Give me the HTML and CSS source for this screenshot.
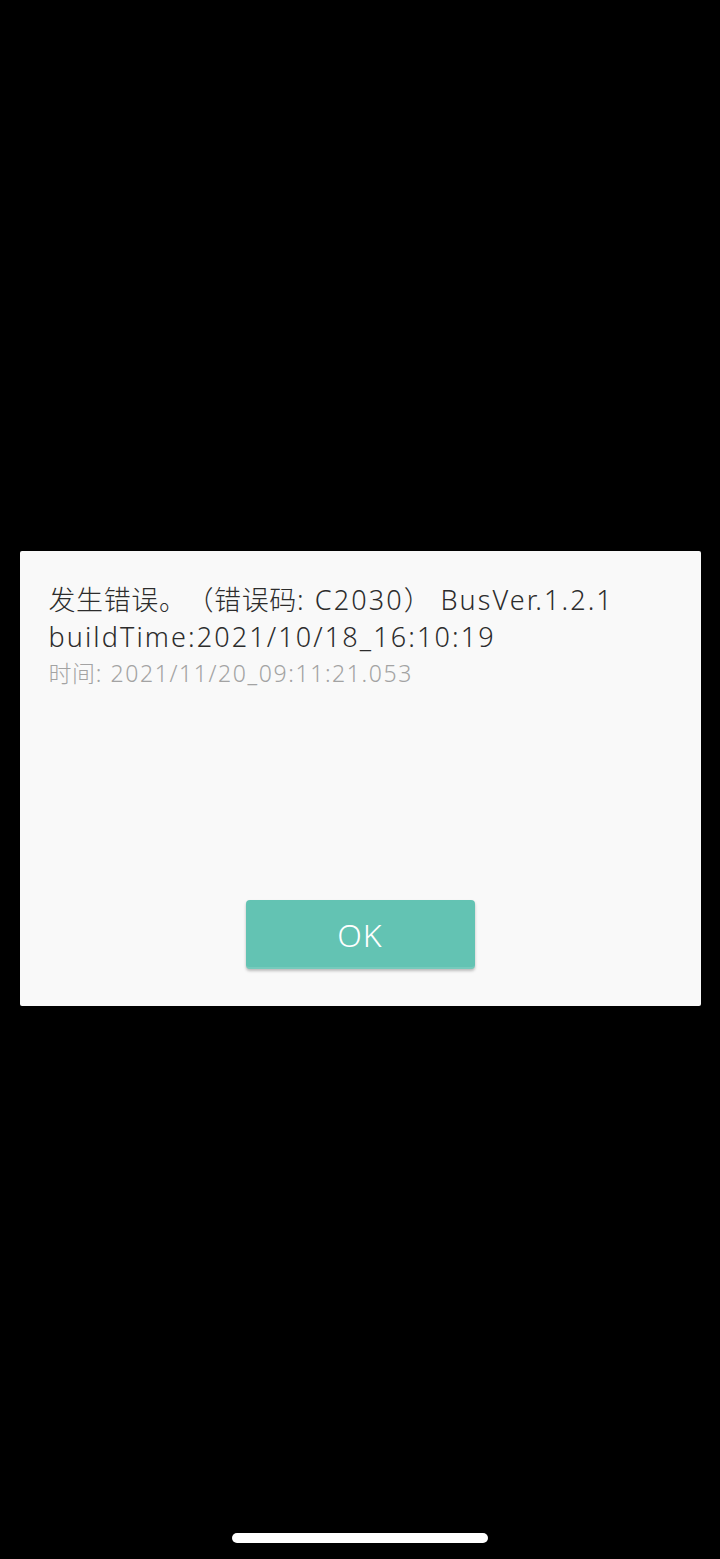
FILE: index.html
```
<!DOCTYPE html>
<html>
<head>
<meta charset="utf-8">
<link rel="stylesheet" href="styles.css">
</head>
<body>
<div class="screen">
  <div class="dialog">
    <div class="msg">
      <div class="line main"><span class="cjk">发生错误。（错误码</span>: C2030<span class="cjk">）</span> BusVer.1.2.1</div>
      <div class="line main">buildTime:2021/10/18_16:10:19</div>
      <div class="line sub"><span class="cjk">时间</span>: 2021/11/20_09:11:21.053</div>
    </div>
    <div class="actions">
      <button class="ok">OK</button>
    </div>
  </div>
  <div class="home-bar"></div>
</div>
</body>
</html>
```
FILE: styles.css
```
html, body {
  margin: 0;
  padding: 0;
  background: #000;
}
.screen {
  width: 720px;
  height: 1559px;
  background: #000;
  display: flex;
  flex-direction: column;
  align-items: center;
  position: relative;
  font-family: "Noto Sans", "Noto Sans CJK SC", sans-serif;
}
.dialog {
  margin-top: 551px;
  width: 681px;
  height: 455px;
  background: #f9f9f9;
  border-radius: 2px;
  box-sizing: border-box;
  padding: 30px 0 0 0;
  display: flex;
  flex-direction: column;
}
.msg {
  flex: 1;
  padding-left: 29px;
}
.line {
  white-space: nowrap;
  text-spacing-trim: space-all;
}
.main {
  font-size: 27px;
  line-height: 37px;
  color: #2c2c2c;
  font-weight: 300;
  letter-spacing: 2.1px;
}
.sub {
  font-size: 23px;
  line-height: 36px;
  color: #a3a3a3;
  font-weight: 300;
  letter-spacing: 1.6px;
}
.cjk {
  letter-spacing: 0.6px;
}
.actions {
  display: flex;
  justify-content: center;
  padding-bottom: 37px;
}
.ok {
  width: 229px;
  height: 69px;
  border: none;
  border-radius: 4px;
  background: #63c3b3;
  color: #fff;
  font-family: "Noto Sans", sans-serif;
  font-weight: 300;
  font-size: 32px;
  letter-spacing: 1px;
  box-shadow: 0 2px 3px rgba(0,0,0,0.25), inset 0 -4px 0 -2px rgba(255,255,255,0.12);
  padding: 0;
}
.home-bar {
  position: absolute;
  left: 232px;
  top: 1533px;
  width: 256px;
  height: 10px;
  border-radius: 5px;
  background: #fff;
}
```
